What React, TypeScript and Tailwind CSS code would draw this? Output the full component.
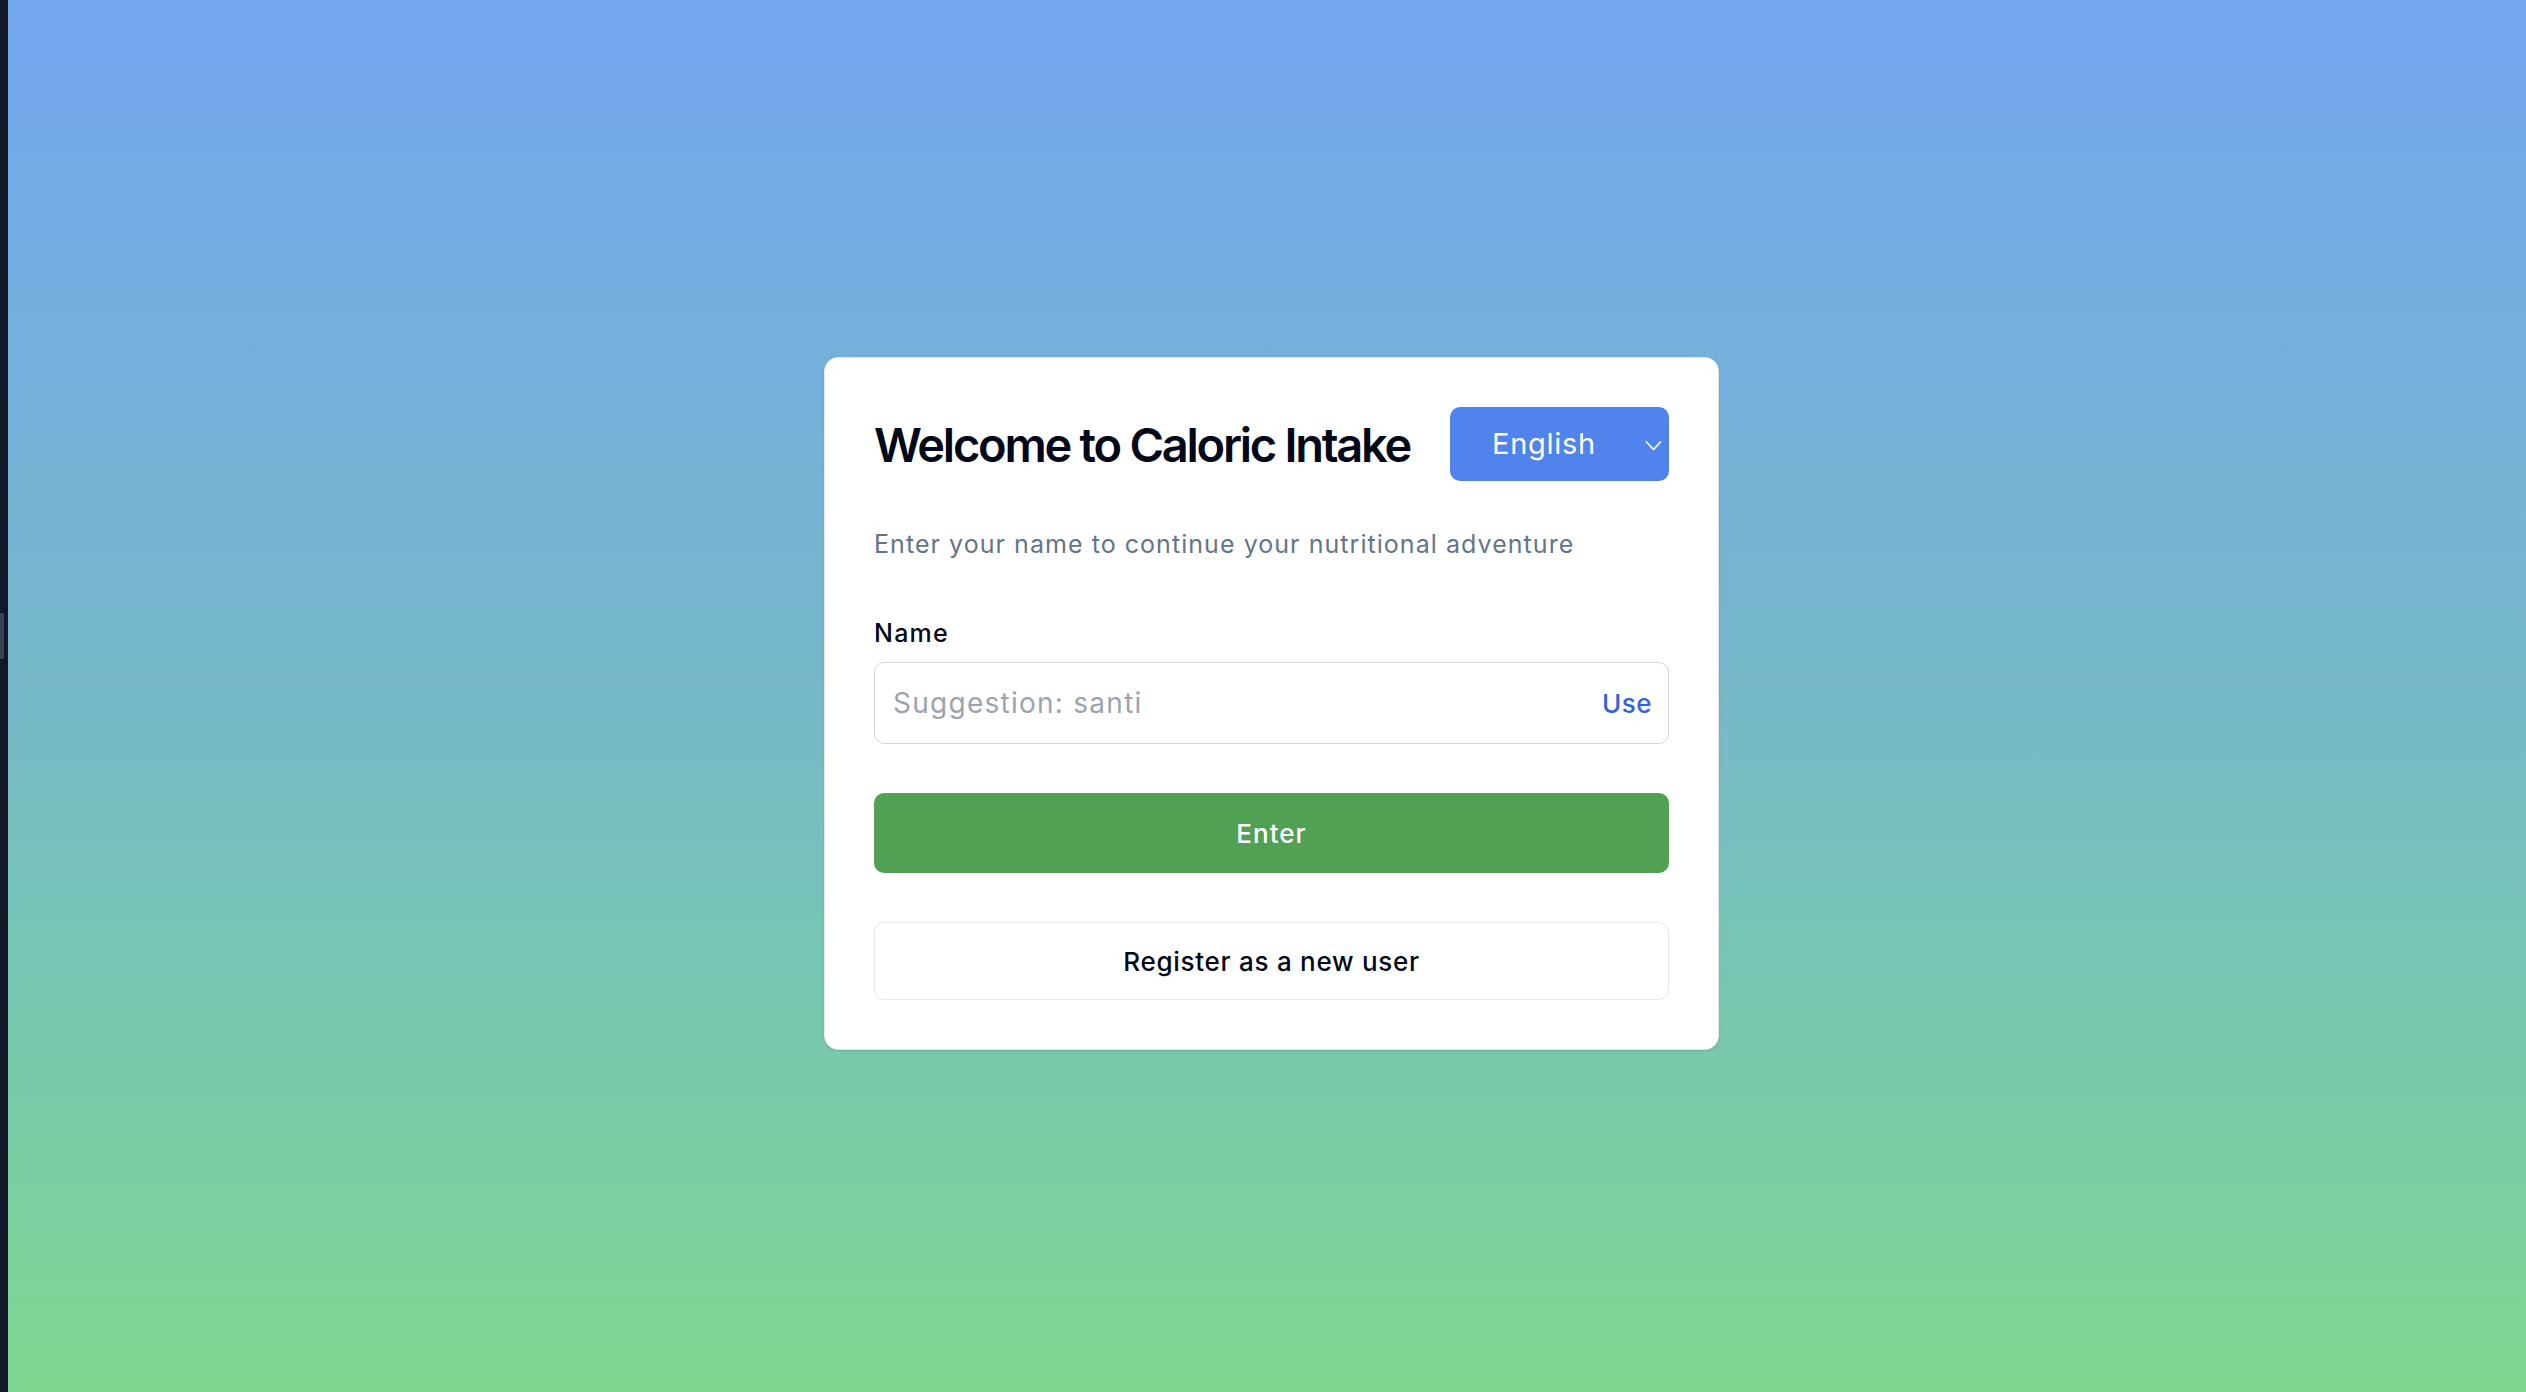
import { useState } from "react";

export default function App() {
  const [name, setName] = useState("");
  const [lang, setLang] = useState("en");
  const suggestion = "santi";

  return (
    <div className="flex h-[1392px] w-full font-['Inter','Liberation_Sans',sans-serif]">
      {/* dark edge on the left */}
      <div className="relative w-[8px] shrink-0 bg-[#111827]">
        <div className="absolute left-0 top-[613px] h-[46px] w-[4px] rounded-r-[2px] bg-[#374151]" />
      </div>

      <div className="flex flex-1 items-center justify-center bg-gradient-to-b from-[#74a5f0] via-[#76b9c8] to-[#7ed78e] pl-[9px] pt-[15px]">
        <div className="w-[895px] rounded-[14px] border border-[#e5e7eb] bg-white p-[49px] shadow-sm">
          <div className="flex items-center justify-between">
            <h1 className="text-[47px] font-semibold leading-none tracking-[-0.048em] text-[#020817]">
              Welcome to Caloric Intake
            </h1>
            <div className="relative">
              <select
                value={lang}
                onChange={(e) => setLang(e.target.value)}
                className="h-[74px] w-[219px] appearance-none rounded-[10px] bg-[#5083ec] pl-[42px] text-[29px] tracking-[0.025em] text-white outline-none"
              >
                <option value="en">English</option>
                <option value="es">Español</option>
              </select>
              <svg
                className="pointer-events-none absolute right-[7px] top-[39px] -translate-y-1/2"
                width="17"
                height="11"
                viewBox="0 0 17 11"
                fill="none"
              >
                <path d="M1.5 1.5 L8.5 9 L15.5 1.5" stroke="white" strokeWidth="1.8" strokeLinecap="round" strokeLinejoin="round" />
              </svg>
            </div>
          </div>

          <p className="mt-[45px] text-[25px] leading-[37px] tracking-[0.042em] text-[#64748b]">
            Enter your name to continue your nutritional adventure
          </p>

          <label className="mt-[52px] block text-[25px] font-medium leading-[37px] tracking-[0.05em] text-[#020817]">Name</label>
          <div className="relative mt-[10px]">
            <input
              type="text"
              value={name}
              onChange={(e) => setName(e.target.value)}
              placeholder={"Suggestion: " + suggestion}
              className="h-[82px] w-full rounded-[10px] border-[1.5px] border-[#d1d5db] bg-white pl-[18px] pr-[90px] text-[28px] tracking-[0.045em] text-[#020817] outline-none placeholder:text-[#9ca3af]"
            />
            <button
              onClick={() => setName(suggestion)}
              className="absolute right-[17px] top-1/2 -translate-y-1/2 text-[26px] font-medium tracking-[0.02em] text-[#2f63e0]"
            >
              Use
            </button>
          </div>

          <button className="mt-[49px] h-[80px] w-full rounded-[10px] bg-[#51a155] text-[26px] font-medium tracking-[0.04em] text-white">
            Enter
          </button>

          <button className="mt-[49px] h-[78px] w-full rounded-[10px] border-[1.5px] border-[#e5e7eb] bg-white text-[26px] font-medium tracking-[0.028em] text-[#020817]">
            Register as a new user
          </button>
        </div>
      </div>
    </div>
  );
}
